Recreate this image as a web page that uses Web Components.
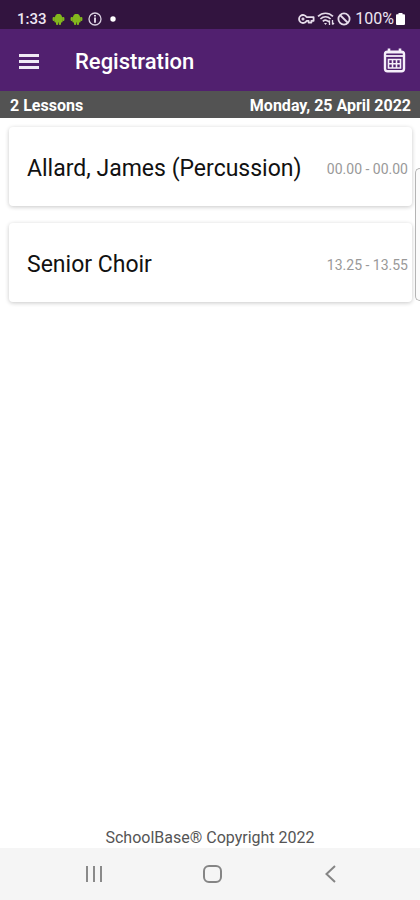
<!DOCTYPE html>
<html lang="en">
<head>
<meta charset="utf-8">
<meta name="viewport" content="width=device-width, initial-scale=1">
<title>Registration</title>
<style>
  body {
    margin: 0;
    font-family: Roboto, "Liberation Sans", sans-serif;
    background: #fff;
  }
</style>
</head>
<body>
<registration-app></registration-app>

<script>
class StatusBar extends HTMLElement {
  constructor() {
    super();
    this.attachShadow({ mode: 'open' });
    this.shadowRoot.innerHTML = `
      <style>
        :host {
          display: flex;
          align-items: center;
          justify-content: space-between;
          box-sizing: border-box;
          height: 29px;
          padding: 8px 15px 0 17px;
          background: #32143f;
          color: #eee6f2;
          font-size: 16px;
          line-height: 20px;
        }
        .group { display: flex; align-items: center; }
        .time { font-size: 15px; font-weight: 500; }
        .left { gap: 5px; }
        .right { gap: 2px; }
        .level { margin-left: 2px; }
        svg { display: block; }
      </style>
      <div class="group left">
        <span class="time">${this.getAttribute('time')}</span>
        ${this.robot()}
        ${this.robot()}
        <svg width="14" height="14" viewBox="0 0 14 14" fill="none" stroke="#d9cfe0">
          <circle cx="7" cy="7" r="6" stroke-width="1.3"/>
          <path d="M7 3v1.6M7 5.6v5.2" stroke-width="2"/>
        </svg>
        <svg width="12" height="14" viewBox="0 0 12 14"><circle cx="6" cy="7" r="2.7" fill="#fff"/></svg>
      </div>
      <div class="group right">
        <svg width="17" height="14" viewBox="0 0 17 14" fill="none" stroke="#e6dcea" stroke-width="1.8">
          <path d="M8.6 5.2A4 4 0 1 0 8.6 8.8H10.6V10.6H13.4V8.8H15.6V5.2Z" stroke-linejoin="round"/>
          <circle cx="5" cy="7" r="1.1" fill="#e6dcea" stroke-width="1"/>
        </svg>
        <svg width="18" height="14" viewBox="0 0 18 14" fill="none" stroke="#e6dcea" stroke-width="1.7">
          <path d="M1 4.4C5.4.2 11.6.2 16 4.4M3.4 7C6.4 4.2 10.6 4.2 13.6 7M5.8 9.4C7.4 8 9.6 8 11 9.4"/>
          <path d="M7 11h3l-1.5 2z" fill="#e6dcea" stroke="none"/>
          <path d="M12.5 13V8.5M11 10l1.5-1.6M15.5 8v4.5M17 11l-1.5 1.6" stroke-width="1.3"/>
        </svg>
        <svg width="14" height="14" viewBox="0 0 14 14" fill="none" stroke="#e6dcea" stroke-width="1.8">
          <circle cx="7" cy="7" r="5.6"/>
          <path d="M3 3l8 8"/>
        </svg>
        <span class="level">${this.getAttribute('battery')}</span>
        <svg width="9" height="14" viewBox="0 0 9 14" fill="#fff">
          <path d="M2.5 1h4v1.2H8q1 0 1 1V12q0 1-1 1H1q-1 0-1-1V3.2q0-1 1-1h1.5z"/>
        </svg>
      </div>
    `;
  }

  robot() {
    return `
      <svg width="13" height="14" viewBox="0 0 13 14" fill="#83b71d">
        <path d="M3 5.2C3 3.5 4.2 2.3 5 1.9h3C8.8 2.3 10 3.5 10 5.2z"/>
        <path d="M2.4 5h8.200v4.6q0 1-1 1H3.4q-1 0-1-1z"/>
        <rect x="0.6" y="5" width="2.2" height="4" rx="1"/>
        <rect x="10.2" y="5" width="2.2" height="4" rx="1"/>
        <rect x="4" y="9" width="2.2" height="4" rx="1"/>
        <rect x="6.8" y="9" width="2.2" height="4" rx="1"/>
      </svg>`;
  }
}

class AppBar extends HTMLElement {
  constructor() {
    super();
    this.attachShadow({ mode: 'open' });
    this.shadowRoot.innerHTML = `
      <style>
        :host {
          display: flex;
          align-items: center;
          box-sizing: border-box;
          height: 62px;
          padding: 3px 13px 0 16px;
          background: #51206f;
          color: #fff;
        }
        h1 {
          flex: 1;
          margin: 0 0 0 32px;
          font-size: 22px;
          line-height: 28px;
          font-weight: 500;
        }
        button {
          padding: 0;
          border: 0;
          background: none;
          color: inherit;
        }
        svg { display: block; }
      </style>
      <button type="button" aria-label="Menu">
        <svg width="27" height="28" viewBox="0 0 27 28" fill="#f0eaf5">
          <path d="M3 6h20v3H3zM3 12h20v3H3zM3 18h20v3H3z"/>
        </svg>
      </button>
      <h1><slot></slot></h1>
      <button type="button" aria-label="Choose date">
        <svg width="26" height="28" viewBox="0 0 26 28" fill="none" stroke="#f5effa">
          <rect x="4" y="3.6" width="19" height="19.6" rx="2.5" stroke-width="2.4"/>
          <path d="M8 0.6v4M19 0.6v4" stroke-width="2.6"/>
          <path d="M4 4.4h19" stroke-width="2.2"/>
          <path d="M4 8h19" stroke-width="1.8"/>
          <path d="M7.5 11.5h12v8.500h-12zM11.5 11.5v8.5M15.5 11.5v8.5M7.5 15.7h12" stroke-width="1.6"/>
        </svg>
      </button>
    `;
  }
}

class DayBar extends HTMLElement {
  constructor() {
    super();
    this.attachShadow({ mode: 'open' });
    this.shadowRoot.innerHTML = `
      <style>
        :host {
          display: flex;
          align-items: center;
          justify-content: space-between;
          height: 27px;
          padding: 2px 9px 0 10px;
          box-sizing: border-box;
          background: #535353;
          color: #fff;
          font-size: 16px;
          line-height: 20px;
          font-weight: 700;
        }
      </style>
      <slot name="count"></slot>
      <slot name="date"></slot>
    `;
  }
}

class LessonCard extends HTMLElement {
  constructor() {
    super();
    this.attachShadow({ mode: 'open' });
    this.shadowRoot.innerHTML = `
      <style>
        :host {
          display: flex;
          align-items: center;
          justify-content: space-between;
          height: 79px;
          padding: 4px 4px 0 18px;
          box-sizing: border-box;
          border-radius: 4px;
          background: #fff;
          box-shadow: 0 1px 4px rgba(0, 0, 0, 0.22);
        }
        .name {
          color: #111;
          font-size: 23px;
          line-height: 28px;
        }
        .time {
          color: #999;
          font-size: 14px;
          line-height: 20px;
          white-space: nowrap;
        }
      </style>
      <span class="name"><slot></slot></span>
      <span class="time"><slot name="time"></slot></span>
    `;
  }
}

class EdgeHandle extends HTMLElement {
  constructor() {
    super();
    this.attachShadow({ mode: 'open' });
    this.shadowRoot.innerHTML = `
      <style>
        :host {
          display: block;
          box-sizing: border-box;
          width: 5px;
          height: 133px;
          border: 1px solid #b4b4b4;
          border-right: 0;
          border-radius: 5px 0 0 5px;
          background: #fbfbfb;
        }
      </style>
    `;
  }
}

class NavBar extends HTMLElement {
  constructor() {
    super();
    this.attachShadow({ mode: 'open' });
    this.shadowRoot.innerHTML = `
      <style>
        :host {
          display: flex;
          align-items: center;
          justify-content: space-around;
          height: 52px;
          padding: 0 31px 0 35px;
          background: #f5f5f5;
        }
        button {
          padding: 0;
          border: 0;
          background: none;
        }
        svg { display: block; }
      </style>
      <button type="button" aria-label="Recent apps">
        <svg width="22" height="22" viewBox="0 0 22 22" fill="none" stroke="#8a8a8a" stroke-width="2">
          <path d="M4 3v16M11 3v16M18 3v16"/>
        </svg>
      </button>
      <button type="button" aria-label="Home">
        <svg width="22" height="22" viewBox="0 0 22 22" fill="none" stroke="#858585" stroke-width="2">
          <rect x="3" y="3" width="17" height="16" rx="5"/>
        </svg>
      </button>
      <button type="button" aria-label="Back">
        <svg width="22" height="22" viewBox="0 0 22 22" fill="none" stroke="#858585" stroke-width="2">
          <path d="M16 3l-8.5 8 8.5 8"/>
        </svg>
      </button>
    `;
  }
}

class RegistrationApp extends HTMLElement {
  constructor() {
    super();
    this.attachShadow({ mode: 'open' });
    this.lessons = [
      { name: 'Allard, James (Percussion)', time: '00.00 - 00.00' },
      { name: 'Senior Choir', time: '13.25 - 13.55' }
    ];
    this.render();
  }

  render() {
    this.shadowRoot.innerHTML = `
      <style>
        :host {
          display: flex;
          flex-direction: column;
          min-height: 100vh;
        }
        main {
          position: relative;
          flex: 1;
          display: flex;
          flex-direction: column;
          gap: 17px;
          padding: 9px 8px 9px 9px;
        }
        edge-handle {
          position: absolute;
          top: 50px;
          right: 0;
        }
        footer {
          color: #555;
          font-size: 16px;
          line-height: 20px;
          text-align: center;
        }
      </style>
      <status-bar time="1:33" battery="100%"></status-bar>
      <app-bar>Registration</app-bar>
      <day-bar>
        <span slot="count">${this.lessons.length} Lessons</span>
        <span slot="date">Monday, 25 April 2022</span>
      </day-bar>
      <main>
        ${this.lessons.map(lesson => `
          <lesson-card>${lesson.name}<span slot="time">${lesson.time}</span></lesson-card>
        `).join('')}
        <edge-handle></edge-handle>
      </main>
      <footer>SchoolBase® Copyright 2022</footer>
      <nav-bar></nav-bar>
    `;
  }
}

customElements.define('status-bar', StatusBar);
customElements.define('app-bar', AppBar);
customElements.define('day-bar', DayBar);
customElements.define('lesson-card', LessonCard);
customElements.define('edge-handle', EdgeHandle);
customElements.define('nav-bar', NavBar);
customElements.define('registration-app', RegistrationApp);
</script>
</body>
</html>
